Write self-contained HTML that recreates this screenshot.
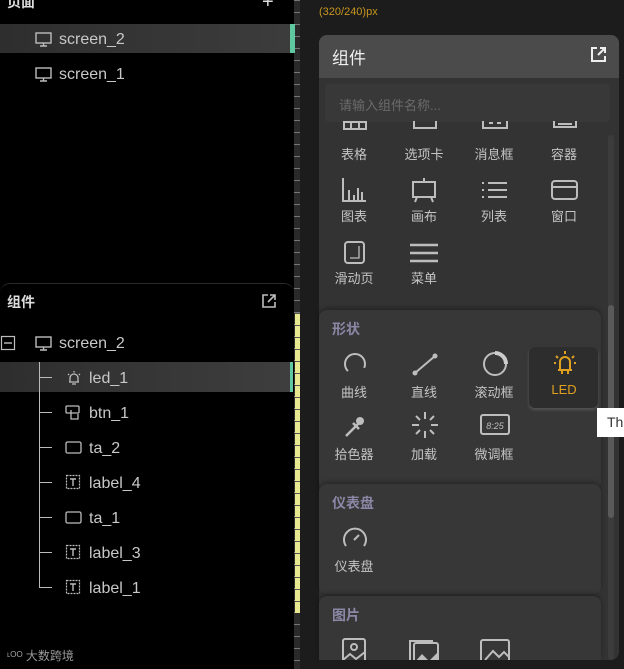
<!DOCTYPE html>
<html><head><meta charset="utf-8"><style>
*{margin:0;padding:0;box-sizing:border-box}
body{width:624px;height:669px;overflow:hidden;background:#1c1c1c;font-family:"Liberation Sans","Noto Sans CJK SC",sans-serif;position:relative;color:#ccc}
.a{position:absolute}
.t{position:absolute;font-size:16px;color:#c8c8c8;white-space:nowrap}
.lbl{position:absolute;font-size:13px;color:#c4c4c4;width:70px;text-align:center;white-space:nowrap}
svg{position:absolute;overflow:visible}
.g{fill:none;stroke:#bdbdbd;stroke-width:2}
.br{position:absolute;left:39px;width:13px;height:1px;background:#bbb}
</style></head><body>
<div class="a" style="left:0;top:0;width:294px;height:669px;background:#000"></div>
<div class="t" style="left:7px;top:-8px;font-size:14px;font-weight:bold;color:#ddd">页面</div>
<div class="t" style="left:262px;top:-9px;font-size:20px;color:#ddd">+</div>
<div class="a" style="left:0;top:24px;width:290px;height:29px;background:linear-gradient(90deg,#2e2e2e,#3c3c3c)"></div>
<div class="a" style="left:290px;top:24px;width:3px;height:29px;background:#5fc8a0"></div>
<svg style="left:35px;top:32px" width="17" height="15"><rect x="1" y="1" width="15" height="10" class="g" style="stroke-width:1.4"/><path d="M8.5 11v3M5 14h7" class="g" style="stroke-width:1.4"/></svg>
<div class="t" style="left:59px;top:31px">screen_2</div>
<svg style="left:35px;top:67px" width="17" height="15"><rect x="1" y="1" width="15" height="10" class="g" style="stroke-width:1.4"/><path d="M8.5 11v3M5 14h7" class="g" style="stroke-width:1.4"/></svg>
<div class="t" style="left:59px;top:66px">screen_1</div>

<div class="a" style="left:0;top:283px;width:294px;height:20px;border-top:1px solid #2a2a2a;border-radius:10px 10px 0 0"></div>
<div class="t" style="left:7px;top:292px;font-size:14px;font-weight:bold;color:#ddd">组件</div>
<svg style="left:262px;top:294px" width="14" height="14"><path d="M6 1H1v12h12V8M8 1h5v5M13 1L6 8" class="g" style="stroke-width:1.6"/></svg>
<svg style="left:1px;top:336px" width="14" height="14"><rect x="0.5" y="0.5" width="13" height="13" class="g" style="stroke-width:1.2"/><path d="M3 7h8" class="g" style="stroke-width:1.4"/></svg>
<svg style="left:35px;top:336px" width="17" height="15"><rect x="1" y="1" width="15" height="10" class="g" style="stroke-width:1.4"/><path d="M8.5 11v3M5 14h7" class="g" style="stroke-width:1.4"/></svg>
<div class="t" style="left:59px;top:335px">screen_2</div>
<div class="a" style="left:0;top:362px;width:290px;height:30px;background:linear-gradient(90deg,#2e2e2e,#3e3e3e)"></div>
<div class="a" style="left:290px;top:362px;width:3px;height:30px;background:#5fc8a0"></div>
<div class="a" style="left:39px;top:362px;width:1px;height:226px;background:#bbb"></div>
<div class="br" style="top:377px"></div><div class="br" style="top:412px"></div><div class="br" style="top:447px"></div><div class="br" style="top:482px"></div><div class="br" style="top:517px"></div><div class="br" style="top:552px"></div><div class="br" style="top:587px"></div>
<svg style="left:66px;top:370px" width="16" height="16"><path d="M4 12V8a4 4 0 0 1 8 0v4M3 12h10M6 14h4M8 1v1.5M2 4l1.2 1M14 4l-1.2 1" class="g" style="stroke-width:1.3"/></svg>
<div class="t" style="left:89px;top:370px">led_1</div>
<svg style="left:65px;top:405px" width="16" height="16"><rect x="1" y="1" width="13" height="7" rx="1" class="g" style="stroke-width:1.3"/><path d="M6 5v9h7v-5" class="g" style="stroke-width:1.3"/></svg>
<div class="t" style="left:89px;top:405px">btn_1</div>
<svg style="left:65px;top:441px" width="17" height="14"><rect x="1" y="1" width="15" height="11" rx="1.5" class="g" style="stroke-width:1.3"/></svg>
<div class="t" style="left:89px;top:440px">ta_2</div>
<svg style="left:66px;top:475px" width="14" height="14"><rect x="0.5" y="0.5" width="13" height="13" class="g" style="stroke-width:1.2;stroke-dasharray:2 1"/><path d="M4 4h6M7 4v7" class="g" style="stroke-width:1.4"/></svg>
<div class="t" style="left:89px;top:475px">label_4</div>
<svg style="left:65px;top:511px" width="17" height="14"><rect x="1" y="1" width="15" height="11" rx="1.5" class="g" style="stroke-width:1.3"/></svg>
<div class="t" style="left:89px;top:510px">ta_1</div>
<svg style="left:66px;top:545px" width="14" height="14"><rect x="0.5" y="0.5" width="13" height="13" class="g" style="stroke-width:1.2;stroke-dasharray:2 1"/><path d="M4 4h6M7 4v7" class="g" style="stroke-width:1.4"/></svg>
<div class="t" style="left:89px;top:545px">label_3</div>
<svg style="left:66px;top:580px" width="14" height="14"><rect x="0.5" y="0.5" width="13" height="13" class="g" style="stroke-width:1.2;stroke-dasharray:2 1"/><path d="M4 4h6M7 4v7" class="g" style="stroke-width:1.4"/></svg>
<div class="t" style="left:89px;top:580px">label_1</div>
<div class="t" style="left:7px;top:647px;font-size:12px;color:#999">ᶫᴼᴼ 大数跨境</div>

<div class="a" style="left:294px;top:0;width:6px;height:669px;background:#2a2a2a;background-image:repeating-linear-gradient(180deg,#777 0 1px,transparent 1px 12px)"></div>
<div class="a" style="left:295px;top:313px;width:5px;height:300px;background:#e8e890;background-image:repeating-linear-gradient(180deg,#555 0 1px,transparent 1px 12px)"></div>
<div class="a" style="left:293px;top:24px;width:2px;height:29px;background:#5fc8a0"></div>

<div class="t" style="left:319px;top:6px;font-size:11px;color:#c8961e">(320/240)px</div>

<div class="a" style="left:319px;top:35px;width:300px;height:625px;background:#333;border-radius:8px;overflow:hidden">
 <div class="a" style="left:0;top:0;width:300px;height:43px;background:#4b4b4b"></div>
 <div class="t" style="left:13px;top:9px;font-size:17px;color:#f0f0f0">组件</div>
 <svg style="left:272px;top:12px" width="15" height="15"><path d="M6 1H1v13h13V9M9 1h5v5M14 1L7 8" fill="none" stroke="#eee" stroke-width="2"/></svg>
 <div class="a" style="left:6px;top:49px;width:285px;height:38px;background:#383838;border-radius:4px"></div>
 <div class="t" style="left:20px;top:60px;font-size:13px;color:#6a6a6a">请输入组件名称...</div>
 <div class="a" style="left:289px;top:100px;width:6px;height:525px;background:#3c3c3c;border-radius:3px"></div>
 <div class="a" style="left:289px;top:270px;width:6px;height:213px;background:#5a5a5a;border-radius:3px"></div>
</div>
<div class="a" style="left:319px;top:121px;width:290px;height:20px;overflow:hidden">
<svg style="left:24px;top:-8px" width="24" height="20"><rect x="1" y="1" width="22" height="15" class="g"/><path d="M1 9h22M8 9v7M16 9v7" class="g"/></svg>
<svg style="left:94px;top:-8px" width="24" height="20"><path d="M1 1v14h22V1" class="g"/></svg>
<svg style="left:163px;top:-8px" width="26" height="20"><path d="M1 1v14h24V1M7 10h4M15 10h4" class="g"/></svg>
<svg style="left:233px;top:-8px" width="26" height="20"><path d="M2 1v13h22V1M6 11h14" class="g"/></svg>
</div>
<div class="lbl" style="left:319px;top:144px">表格</div>
<div class="lbl" style="left:389px;top:144px">选项卡</div>
<div class="lbl" style="left:459px;top:144px">消息框</div>
<div class="lbl" style="left:529px;top:144px">容器</div>
<svg style="left:342px;top:178px" width="24" height="24"><path d="M1 0v23h23M7 12v10M12 17v5M16 10v12M20 14v8" class="g"/></svg>
<svg style="left:411px;top:177px" width="26" height="26"><rect x="2" y="5" width="22" height="15" class="g"/><path d="M13 1v4M4 25l2-5M22 25l-2-5" class="g"/></svg>
<svg style="left:482px;top:181px" width="25" height="18"><path d="M0 2h2M0 9h2M0 16h2M6 2h19M6 9h19M6 16h19" class="g"/></svg>
<svg style="left:551px;top:180px" width="27" height="20"><rect x="1" y="1" width="25" height="18" rx="3" class="g"/><path d="M1 7h25" class="g"/></svg>
<div class="lbl" style="left:319px;top:206px">图表</div>
<div class="lbl" style="left:389px;top:206px">画布</div>
<div class="lbl" style="left:459px;top:206px">列表</div>
<div class="lbl" style="left:529px;top:206px">窗口</div>
<svg style="left:344px;top:241px" width="22" height="24"><rect x="1" y="1" width="19" height="21" rx="3" class="g"/><path d="M6 17h9V5" class="g" style="stroke-width:1.3"/></svg>
<svg style="left:410px;top:243px" width="28" height="20"><path d="M0 2h28M0 10h28M0 18h28" class="g" style="stroke-width:2.4"/></svg>
<div class="lbl" style="left:319px;top:268px">滑动页</div>
<div class="lbl" style="left:389px;top:268px">菜单</div>

<div class="a" style="left:319px;top:310px;width:282px;height:180px;background:#373737;border-radius:8px;box-shadow:0 -2px 4px rgba(0,0,0,.3)"></div>
<div class="t" style="left:332px;top:319px;font-size:14px;font-weight:bold;color:#8b87a6">形状</div>
<div class="a" style="left:529px;top:347px;width:69px;height:61px;border-radius:6px;background:#2d2d2d;box-shadow:0 2px 3px #555"></div>
<svg style="left:342px;top:351px" width="26" height="26"><circle cx="13" cy="13" r="10" class="g" stroke-dasharray="43 20" transform="rotate(135 13 13)"/></svg>
<svg style="left:412px;top:352px" width="26" height="24"><path d="M3 21L23 4" class="g"/><circle cx="3" cy="21" r="2.5" fill="#bdbdbd"/><circle cx="23" cy="4" r="2.5" fill="#bdbdbd"/></svg>
<svg style="left:481px;top:350px" width="28" height="28"><circle cx="14" cy="14" r="11" class="g"/><path d="M14 3A11 11 0 0 1 25 14" fill="none" stroke="#ccc" stroke-width="4"/></svg>
<svg style="left:553px;top:350px" width="24" height="26"><path d="M7 20v-8a5 5 0 0 1 10 0v8M5 20h14M9 24v-4M15 24v-4M12 1v3M3 6l2 2M21 6l-2 2M1 13h2M21 13h2" fill="none" stroke="#e0a020" stroke-width="2"/></svg>
<div class="lbl" style="left:319px;top:382px">曲线</div>
<div class="lbl" style="left:389px;top:382px">直线</div>
<div class="lbl" style="left:459px;top:382px">滚动框</div>
<div class="lbl" style="left:529px;top:382px;color:#e0a020">LED</div>
<div class="a" style="left:597px;top:408px;width:30px;height:29px;background:#fff"></div>
<div class="t" style="left:607px;top:414px;font-size:14px;color:#333">Th</div>
<svg style="left:344px;top:414px" width="22" height="24"><path d="M3 21l11-11M9 9l6 6M3 21l-1 1" class="g" style="stroke-width:2.5"/><circle cx="16" cy="7" r="4" fill="#bdbdbd"/></svg>
<svg style="left:411px;top:411px" width="28" height="28"><path d="M14 1v7M14 20v7M1 14h7M20 14h7M5 5l4 4M19 19l4 4M23 5l-4 4M9 19l-4 4" class="g"/></svg>
<svg style="left:480px;top:414px" width="30" height="22"><rect x="1" y="1" width="28" height="19" rx="2" class="g"/><text x="15" y="15" font-size="9" fill="#bdbdbd" text-anchor="middle" font-style="italic" font-family="Liberation Sans">8:25</text></svg>
<div class="lbl" style="left:319px;top:444px">拾色器</div>
<div class="lbl" style="left:389px;top:444px">加载</div>
<div class="lbl" style="left:459px;top:444px">微调框</div>

<div class="a" style="left:319px;top:484px;width:282px;height:110px;background:#373737;border-radius:8px;box-shadow:0 -2px 4px rgba(0,0,0,.3)"></div>
<div class="t" style="left:332px;top:493px;font-size:14px;font-weight:bold;color:#8b87a6">仪表盘</div>
<svg style="left:341px;top:525px" width="28" height="24"><path d="M5 21A11 11 0 1 1 23 21" class="g"/><path d="M13 15l5-5" class="g"/></svg>
<div class="lbl" style="left:319px;top:556px">仪表盘</div>

<div class="a" style="left:319px;top:596px;width:282px;height:64px;background:#373737;border-radius:8px 8px 0 0;box-shadow:0 -2px 4px rgba(0,0,0,.3)"></div>
<div class="t" style="left:332px;top:605px;font-size:14px;font-weight:bold;color:#8b87a6">图片</div>
<div class="a" style="left:319px;top:630px;width:290px;height:30px;overflow:hidden">
<svg style="left:23px;top:8px" width="26" height="30"><rect x="1" y="1" width="22" height="26" rx="2" class="g"/><circle cx="12" cy="9" r="3" class="g"/><path d="M1 22l7-6 6 5 9-7" class="g"/></svg>
<svg style="left:90px;top:8px" width="32" height="30"><rect x="5" y="5" width="24" height="20" rx="2" class="g"/><path d="M1 22V3h23" class="g"/><path d="M5 25l8-9 7 7 9-9v11z" fill="#bdbdbd"/></svg>
<svg style="left:159px;top:7px" width="34" height="30"><rect x="3" y="3" width="28" height="24" rx="2" class="g"/><path d="M7 23l8-9 6 6 5-5 5 5" class="g"/></svg>
</div>
<div class="a" style="left:319px;top:660px;width:300px;height:9px;background:#1c1c1c"></div>
</body></html>
